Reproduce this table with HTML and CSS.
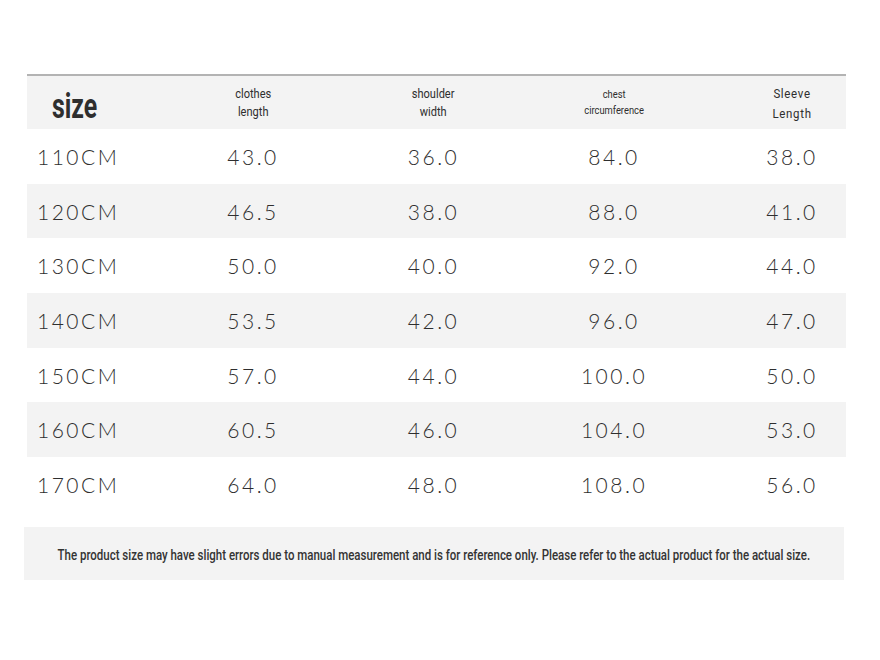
FILE: index.html
```html
<!DOCTYPE html>
<html>
<head>
<meta charset="utf-8">
<link rel="stylesheet" href="styles.css">
</head>
<body>
<div class="sheet">
  <div class="table">
    <div class="row head">
      <div class="cell first"><span class="size-title">size</span></div>
      <div class="cell"><span class="h">clothes<br>length</span></div>
      <div class="cell"><span class="h">shoulder<br>width</span></div>
      <div class="cell"><span class="h small">chest<br>circumference</span></div>
      <div class="cell last"><span class="h wide">Sleeve<br>Length</span></div>
    </div>
    <div class="row"><div class="cell first">110CM</div><div class="cell">43.0</div><div class="cell">36.0</div><div class="cell">84.0</div><div class="cell last">38.0</div></div>
    <div class="row alt"><div class="cell first">120CM</div><div class="cell">46.5</div><div class="cell">38.0</div><div class="cell">88.0</div><div class="cell last">41.0</div></div>
    <div class="row"><div class="cell first">130CM</div><div class="cell">50.0</div><div class="cell">40.0</div><div class="cell">92.0</div><div class="cell last">44.0</div></div>
    <div class="row alt"><div class="cell first">140CM</div><div class="cell">53.5</div><div class="cell">42.0</div><div class="cell">96.0</div><div class="cell last">47.0</div></div>
    <div class="row"><div class="cell first">150CM</div><div class="cell">57.0</div><div class="cell">44.0</div><div class="cell">100.0</div><div class="cell last">50.0</div></div>
    <div class="row alt"><div class="cell first">160CM</div><div class="cell">60.5</div><div class="cell">46.0</div><div class="cell">104.0</div><div class="cell last">53.0</div></div>
    <div class="row"><div class="cell first">170CM</div><div class="cell">64.0</div><div class="cell">48.0</div><div class="cell">108.0</div><div class="cell last">56.0</div></div>
  </div>
  <div class="note"><span class="note-text">The product size may have slight errors due to manual measurement and is for reference only. Please refer to the actual product for the actual size.</span></div>
</div>
</body>
</html>
```
FILE: styles.css
```css
html, body {
  margin: 0;
  padding: 0;
  background: #ffffff;
}
.sheet {
  padding: 74px 0 0 27px;
  width: 819px;
  color: #2e2e2e;
}
.table {
  border-top: 2px solid #b3b3b3;
}
.row {
  display: grid;
  grid-template-columns: 136px 180px 181px 180px 142px;
  height: 54.7px;
  align-items: center;
  font-family: "Lato", "DejaVu Sans", sans-serif;
  font-weight: 300;
  font-size: 21px;
  letter-spacing: 2.5px;
}
.row.head {
  height: 53px;
  background: #f3f3f3;
}
.row.alt {
  background: #f3f3f3;
}
.cell {
  text-align: center;
}
.cell.first {
  text-align: left;
  padding-left: 10px;
}
.cell.last {
  padding-left: 34px;
}
.size-title {
  display: inline-block;
  margin-left: 15px;
  margin-top: 8px;
  font-family: "Roboto", sans-serif;
  font-weight: 700;
  font-size: 35px;
  line-height: 40px;
  letter-spacing: 0;
  transform: scaleX(0.71);
  transform-origin: left center;
}
.h {
  display: inline-block;
  font-family: "Roboto", sans-serif;
  font-weight: 400;
  font-size: 13px;
  line-height: 18px;
  letter-spacing: 0;
  transform: scaleX(0.85);
}
.h.small {
  font-size: 11px;
  line-height: 16px;
}
.h.wide {
  font-size: 13.5px;
  letter-spacing: 0.8px;
  line-height: 20px;
}
.note {
  margin: 15px 0 0 -3px;
  height: 53px;
  width: 820px;
  background: #f3f3f3;
  display: flex;
  align-items: center;
  justify-content: center;
  white-space: nowrap;
}
.note-text {
  display: inline-block;
  padding-top: 3px;
  font-family: "Roboto", sans-serif;
  font-weight: 500;
  font-size: 14px;
  color: #333333;
  transform: scaleX(0.82);
  transform-origin: center center;
}
```
